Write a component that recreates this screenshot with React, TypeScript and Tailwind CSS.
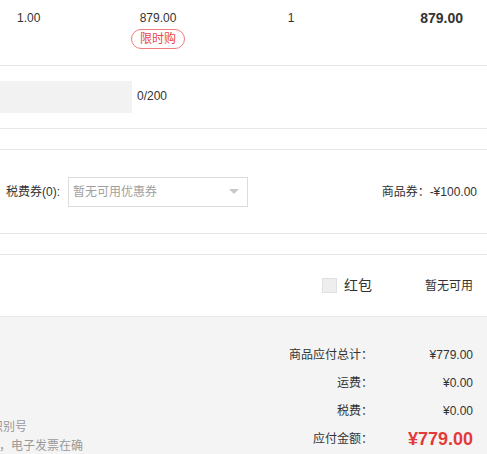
import React from "react";

export default function App() {
  const font = { fontFamily: '"Liberation Sans", Arial, "Noto Sans CJK SC", sans-serif' };
  return (
    <div className="w-[487px] h-[454px] overflow-hidden bg-white text-[12px] text-[#333]" style={font}>
      {/* Row 1 */}
      <div className="flex h-[66px] border-b border-[#e8e8e8] pt-[9px]">
        <div className="w-[110px] pl-[17px] leading-[18px]">1.00</div>
        <div className="w-[96px] flex flex-col items-center">
          <div className="leading-[18px]">879.00</div>
          <div className="mt-[2px] h-[20px] px-[8px] rounded-full border border-[#ee7c7e] text-[#e8484a] leading-[18px]">
            限时购
          </div>
        </div>
        <div className="w-[170px] text-center leading-[18px]">1</div>
        <div className="flex-1 text-right pr-[24px] text-[14px] font-bold leading-[18px]">879.00</div>
      </div>

      {/* Remark row */}
      <div className="flex items-center h-[63px] border-b border-[#e8e8e8]">
        <div className="w-[132px] h-[32px] bg-[#f2f2f2]"></div>
        <div className="ml-[5px] -mt-[2px]">0/200</div>
      </div>

      <div className="h-[21px] border-b border-[#e8e8e8]"></div>

      {/* Coupon row */}
      <div className="flex items-center h-[84px] border-b border-[#e8e8e8] pl-[6px] pr-[10px]">
        <span>税费券(0):</span>
        <div className="ml-[8px] w-[180px] h-[30px] border border-[#dcdcdc] flex items-center justify-between pl-[4px] pr-[8px] text-[#a0a0a0]">
          <span>暂无可用优惠券</span>
          <span className="w-0 h-0 border-l-[5px] border-r-[5px] border-t-[5px] border-l-transparent border-r-transparent border-t-[#c8c8c8]"></span>
        </div>
        <div className="flex-1 text-right">商品券：-¥100.00</div>
      </div>

      <div className="h-[21px] border-b border-[#e8e8e8]"></div>

      {/* Red packet row */}
      <div className="flex items-center justify-end h-[62px] border-b border-[#e8e8e8] pr-[14px]">
        <span className="w-[15px] h-[15px] bg-[#eeeeee] border border-[#e0e0e0]"></span>
        <span className="ml-[7px] text-[14px]">红包</span>
        <span className="ml-[53px]">暂无可用</span>
      </div>

      {/* Totals */}
      <div className="bg-[#f4f4f4] h-[137px] flex overflow-hidden">
        <div className="flex-1 overflow-hidden flex flex-col pt-[101px] text-[#999] leading-[19px]">
          <div className="whitespace-nowrap -ml-[45px]">纳税人识别号</div>
          <div className="whitespace-nowrap -ml-[1px]">，电子发票在确</div>
        </div>
        <div className="w-[200px] flex flex-col pt-[24px] pr-[14px]">
          {[
            ["商品应付总计：", "¥779.00"],
            ["运费：", "¥0.00"],
            ["税费：", "¥0.00"],
          ].map(([l, v]) => (
            <div key={l} className="flex h-[28px] items-center">
              <div className="flex-1 text-right">{l}</div>
              <div className="w-[100px] text-right">{v}</div>
            </div>
          ))}
          <div className="flex h-[28px] items-center">
            <div className="flex-1 text-right">应付金额：</div>
            <div className="w-[100px] text-right text-[18px] font-bold text-[#e4393c]">¥779.00</div>
          </div>
        </div>
      </div>
    </div>
  );
}
